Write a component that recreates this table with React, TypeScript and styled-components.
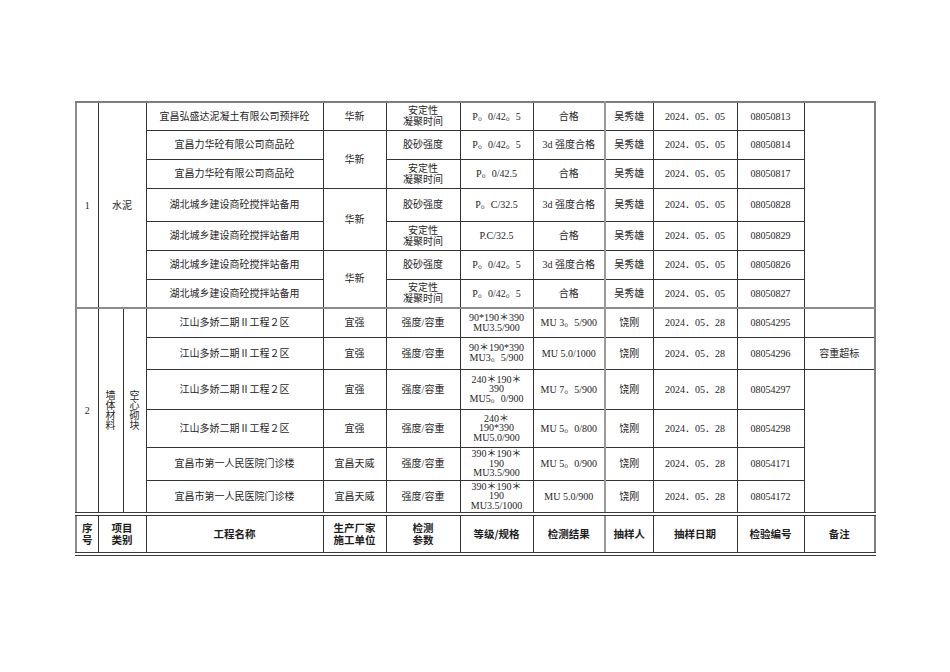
import React from 'react';
import styled, { createGlobalStyle } from 'styled-components';

const GlobalStyle = createGlobalStyle`
  html, body {
    margin: 0;
    padding: 0;
    background: #ffffff;
  }
`;

interface ICementRow {
  project: string;
  maker?: { text: string; span: number };
  param: string;
  spec: string;
  result: string;
  id: string;
  height: number;
}

interface IBlockRow {
  project: string;
  maker: string;
  spec: string;
  result: string;
  id: string;
  note?: { text: string; span: number };
  height: number;
}

const SETTING = '安定性\n凝聚时间';
const MORTAR = '胶砂强度';

const cementRows: ICementRow[] = [
  { project: '宜昌弘盛达泥凝土有限公司预拌砼', maker: { text: '华新', span: 1 }, param: SETTING, spec: 'P。0/42。5', result: '合格', id: '08050813', height: 28 },
  { project: '宜昌力华砼有限公司商品砼', maker: { text: '华新', span: 2 }, param: MORTAR, spec: 'P。0/42。5', result: '3d 强度合格', id: '08050814', height: 29 },
  { project: '宜昌力华砼有限公司商品砼', param: SETTING, spec: 'P。0/42.5', result: '合格', id: '08050817', height: 29 },
  { project: '湖北城乡建设商砼搅拌站备用', maker: { text: '华新', span: 2 }, param: MORTAR, spec: 'P。C/32.5', result: '3d 强度合格', id: '08050828', height: 33 },
  { project: '湖北城乡建设商砼搅拌站备用', param: SETTING, spec: 'P.C/32.5', result: '合格', id: '08050829', height: 29 },
  { project: '湖北城乡建设商砼搅拌站备用', maker: { text: '华新', span: 2 }, param: MORTAR, spec: 'P。0/42。5', result: '3d 强度合格', id: '08050826', height: 29 },
  { project: '湖北城乡建设商砼搅拌站备用', param: SETTING, spec: 'P。0/42。5', result: '合格', id: '08050827', height: 29 },
];

const JIANGSHAN = '江山多娇二期Ⅱ工程２区';
const HOSPITAL = '宜昌市第一人民医院门诊楼';

const blockRows: IBlockRow[] = [
  { project: JIANGSHAN, maker: '宜强', spec: '90*190＊390\nMU3.5/900', result: 'MU 3。5/900', id: '08054295', note: { text: '', span: 1 }, height: 29 },
  { project: JIANGSHAN, maker: '宜强', spec: '90＊190*390\nMU3。5/900', result: 'MU 5.0/1000', id: '08054296', note: { text: '容重超标', span: 1 }, height: 32 },
  { project: JIANGSHAN, maker: '宜强', spec: '240＊190＊\n390\nMU5。0/900', result: 'MU 7。5/900', id: '08054297', note: { text: '', span: 4 }, height: 40 },
  { project: JIANGSHAN, maker: '宜强', spec: '240＊\n190*390\nMU5.0/900', result: 'MU 5。0/800', id: '08054298', height: 38 },
  { project: HOSPITAL, maker: '宜昌天威', spec: '390＊190＊\n190\nMU3.5/900', result: 'MU 5。0/900', id: '08054171', height: 33 },
  { project: HOSPITAL, maker: '宜昌天威', spec: '390＊190＊\n190\nMU3.5/1000', result: 'MU 5.0/900', id: '08054172', height: 34 },
];

const columns = [22, 25, 23, 177, 63, 74, 73, 72, 48, 84, 67, 71];

const Page = styled.div`
  padding: 101px 0 0 75px;
  font-family: 'Liberation Serif', 'Noto Sans CJK SC', serif;
  color: #262626;
`;

const Table = styled.table`
  border-collapse: collapse;
  table-layout: fixed;
  width: 799px;
  border-top: 2px solid #7d7d7d;
  border-left: 2px solid #8a8a8a;
  border-right: 2px solid #7d7d7d;
  border-bottom: 4px double #3a3a3a;
`;

const Row = styled.tr<{ $section?: boolean }>`
  & > td {
    border-top: ${(p) => (p.$section ? '2px solid #8c8c8c' : '1px solid #333333')};
  }
`;

const Cell = styled.td<{ $divider?: boolean; $tight?: boolean }>`
  border: 1px solid #333333;
  border-left: ${(p) => (p.$divider ? '2px solid #9a9a9a' : '1px solid #333333')};
  padding: 0 1px;
  text-align: center;
  vertical-align: middle;
  font-size: 10px;
  line-height: ${(p) => (p.$tight ? '9.6px' : '11px')};
  white-space: pre-line;
  overflow: hidden;
`;

const HeadRow = styled.tr`
  height: 40px;
  & > td {
    border-top: 4px double #3a3a3a;
  }
`;

const HeadCell = styled(Cell)`
  font-family: 'Noto Sans CJK SC', 'Liberation Sans', sans-serif;
  font-weight: 700;
  font-size: 10.5px;
  line-height: 12px;
  color: #1e1e1e;
`;

const Vertical = styled.span`
  display: inline-block;
  width: 10px;
  font-size: 10px;
  line-height: 10px;
  word-break: break-all;
  white-space: normal;
`;

const App: React.FC = () => {
  return (
    <Page>
      <GlobalStyle />
      <Table>
        <colgroup>
          {columns.map((w, i) => (
            <col key={i} style={{ width: w }} />
          ))}
        </colgroup>
        <tbody>
          {cementRows.map((r, i) => (
            <Row key={`c${i}`} style={{ height: r.height }}>
              {i === 0 && <Cell rowSpan={cementRows.length}>1</Cell>}
              {i === 0 && (
                <Cell rowSpan={cementRows.length} colSpan={2}>
                  水泥
                </Cell>
              )}
              <Cell>{r.project}</Cell>
              {r.maker && <Cell rowSpan={r.maker.span}>{r.maker.text}</Cell>}
              <Cell>{r.param}</Cell>
              <Cell>{r.spec}</Cell>
              <Cell>{r.result}</Cell>
              <Cell $divider>吴秀雄</Cell>
              <Cell>2024．05．05</Cell>
              <Cell>{r.id}</Cell>
              {i === 0 && <Cell rowSpan={cementRows.length} />}
            </Row>
          ))}
          {blockRows.map((r, i) => (
            <Row key={`b${i}`} $section={i === 0} style={{ height: r.height }}>
              {i === 0 && <Cell rowSpan={blockRows.length}>2</Cell>}
              {i === 0 && (
                <Cell rowSpan={blockRows.length}>
                  <Vertical>墙体材料</Vertical>
                </Cell>
              )}
              {i === 0 && (
                <Cell rowSpan={blockRows.length}>
                  <Vertical>空心砌块</Vertical>
                </Cell>
              )}
              <Cell>{r.project}</Cell>
              <Cell>{r.maker}</Cell>
              <Cell>强度/容重</Cell>
              <Cell $tight>{r.spec}</Cell>
              <Cell>{r.result}</Cell>
              <Cell $divider>饶刚</Cell>
              <Cell>2024．05．28</Cell>
              <Cell>{r.id}</Cell>
              {r.note && <Cell rowSpan={r.note.span}>{r.note.text}</Cell>}
            </Row>
          ))}
          <HeadRow>
            <HeadCell>{'序\n号'}</HeadCell>
            <HeadCell colSpan={2}>{'项目\n类别'}</HeadCell>
            <HeadCell>工程名称</HeadCell>
            <HeadCell>{'生产厂家\n施工单位'}</HeadCell>
            <HeadCell>{'检测\n参数'}</HeadCell>
            <HeadCell>等级/规格</HeadCell>
            <HeadCell>检测结果</HeadCell>
            <HeadCell $divider>抽样人</HeadCell>
            <HeadCell>抽样日期</HeadCell>
            <HeadCell>检验编号</HeadCell>
            <HeadCell>备注</HeadCell>
          </HeadRow>
        </tbody>
      </Table>
    </Page>
  );
};

export default App;
